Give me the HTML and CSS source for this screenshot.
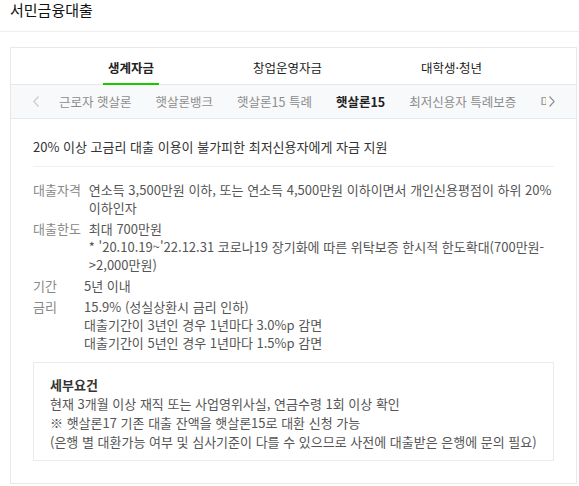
FILE: index.html
```html
<!DOCTYPE html>
<html lang="ko">
<head>
    <meta charset="UTF-8">
    <meta name="viewport" content="width=device-width, initial-scale=1.0">
    <title>서민금융대출</title>
    <link rel="stylesheet" href="styles.css">
</head>
<body>
    <h2 class="page-title">서민금융대출</h2>

    <div class="loan-card">
        <ul class="tabs">
            <li class="tab on"><a href="#">생계자금</a></li>
            <li class="tab"><a href="#">창업운영자금</a></li>
            <li class="tab"><a href="#">대학생·청년</a></li>
        </ul>

        <div class="subnav">
            <button class="subnav-arrow prev" type="button">
                <svg width="6" height="11" viewBox="0 0 6 11"><polyline points="5.5,0.5 0.8,5.5 5.5,10.5" fill="none" stroke="#c9c9c9" stroke-width="1.1"/></svg>
            </button>
            <ul class="subnav-list">
                <li><a href="#">근로자 햇살론</a></li>
                <li><a href="#">햇살론뱅크</a></li>
                <li><a href="#">햇살론15 특례</a></li>
                <li class="on"><a href="#">햇살론15</a></li>
                <li><a href="#">최저신용자 특례보증</a></li>
                <li><a href="#">미소금융</a></li>
            </ul>
            <button class="subnav-arrow next" type="button">
                <svg width="6" height="11" viewBox="0 0 6 11"><polyline points="0.5,0.5 5.2,5.5 0.5,10.5" fill="none" stroke="#8c8c8c" stroke-width="1.1"/></svg>
            </button>
        </div>

        <div class="loan-body">
            <p class="loan-intro">20% 이상 고금리 대출 이용이 불가피한 최저신용자에게 자금 지원</p>

            <dl class="loan-info">
                <div class="info-row">
                    <dt>대출자격</dt>
                    <dd>연소득 3,500만원 이하, 또는 연소득 4,500만원 이하이면서 개인신용평점이 하위 20% 이하인자</dd>
                </div>
                <div class="info-row">
                    <dt>대출한도</dt>
                    <dd>최대 700만원<br>
                        <span class="info-note">* '20.10.19~'22.12.31 코로나19 장기화에 따른 위탁보증 한시적 한도확대(700만원-<br>&gt;2,000만원)</span>
                    </dd>
                </div>
                <div class="info-row">
                    <dt>기간</dt>
                    <dd>5년 이내</dd>
                </div>
                <div class="info-row">
                    <dt>금리</dt>
                    <dd>15.9% (성실상환시 금리 인하)<br>
                        대출기간이 3년인 경우 1년마다 3.0%p 감면<br>
                        대출기간이 5년인 경우 1년마다 1.5%p 감면
                    </dd>
                </div>
            </dl>

            <div class="detail-box">
                <strong class="detail-title">세부요건</strong>
                <p>현재 3개월 이상 재직 또는 사업영위사실, 연금수령 1회 이상 확인<br>
                    ※ 햇살론17 기존 대출 잔액을 햇살론15로 대환 신청 가능<br>
                    (은행 별 대환가능 여부 및 심사기준이 다를 수 있으므로 사전에 대출받은 은행에 문의 필요)</p>
            </div>
        </div>
    </div>
</body>
</html>
```

FILE: styles.css
```css
body {
    margin: 0;
    font-family: "Noto Sans CJK KR", "Noto Sans", sans-serif;
    font-size: 13px;
    color: #333;
    background-color: #fff;
    word-break: keep-all;
}

ul {
    list-style: none;
    margin: 0;
    padding: 0;
}

a {
    color: inherit;
    text-decoration: none;
}

.page-title {
    margin: 0;
    padding: 0 10px 11px;
    font-size: 15px;
    font-weight: normal;
    line-height: 20px;
    color: #111;
    border-bottom: 1px solid #eee;
}

.loan-card {
    margin: 15px 2px 0 10px;
    border: 1px solid #e8e8e8;
}

/* top tabs */
.tabs {
    display: flex;
    gap: 89px;
    padding-left: 92px;
    border-bottom: 1px solid #e6e8eb;
}

.tab a {
    display: block;
    margin-bottom: -1px;
    padding: 11px 5px 6px;
    font-size: 12.5px;
    line-height: 18px;
    color: #222;
    border-bottom: 2px solid transparent;
}

.tab.on a {
    font-weight: bold;
    border-bottom-color: #1ec800;
}

/* sub menu */
.subnav {
    display: flex;
    align-items: center;
    height: 33px;
    padding: 0 21px 0 22px;
    background-color: #f8f9fb;
    border-bottom: 1px solid #e6e8eb;
}

.subnav-arrow {
    flex: 0 0 auto;
    display: flex;
    align-items: center;
    height: 33px;
    padding: 0;
    border: none;
    background: none;
    cursor: pointer;
}

.subnav-arrow.prev {
    width: 14px;
    justify-content: flex-start;
}

.subnav-arrow.next {
    width: 9px;
    justify-content: flex-end;
}

.subnav-list {
    flex: 1;
    display: flex;
    overflow: hidden;
    white-space: nowrap;
}

.subnav-list li {
    flex: 0 0 auto;
}

.subnav-list a {
    display: block;
    padding: 0 12px;
    font-size: 12.5px;
    line-height: 33px;
    color: #8c8c8c;
}

.subnav-list .on a {
    font-weight: bold;
    color: #222;
}

/* content */
.loan-body {
    padding: 19px 22px 22px;
}

.loan-intro {
    margin: 0;
    padding-bottom: 10px;
    line-height: 18px;
    color: #333;
    border-bottom: 1px solid #f0f0f0;
}

.loan-info {
    margin: 14px 0 0;
    line-height: 18px;
}

.info-row {
    display: flex;
}

.info-row + .info-row {
    margin-top: 3px;
}

.info-row dt {
    flex: 0 0 auto;
    box-sizing: border-box;
    min-width: 51px;
    padding-right: 8px;
    color: #888;
}

.info-row dd {
    margin: 0;
    color: #555;
}

.detail-box {
    margin-top: 10px;
    padding: 12px 16px 9px;
    line-height: 19px;
    border: 1px solid #ebebeb;
}

.detail-title {
    display: block;
    color: #333;
}

.detail-box p {
    margin: 0;
    color: #555;
}
```
